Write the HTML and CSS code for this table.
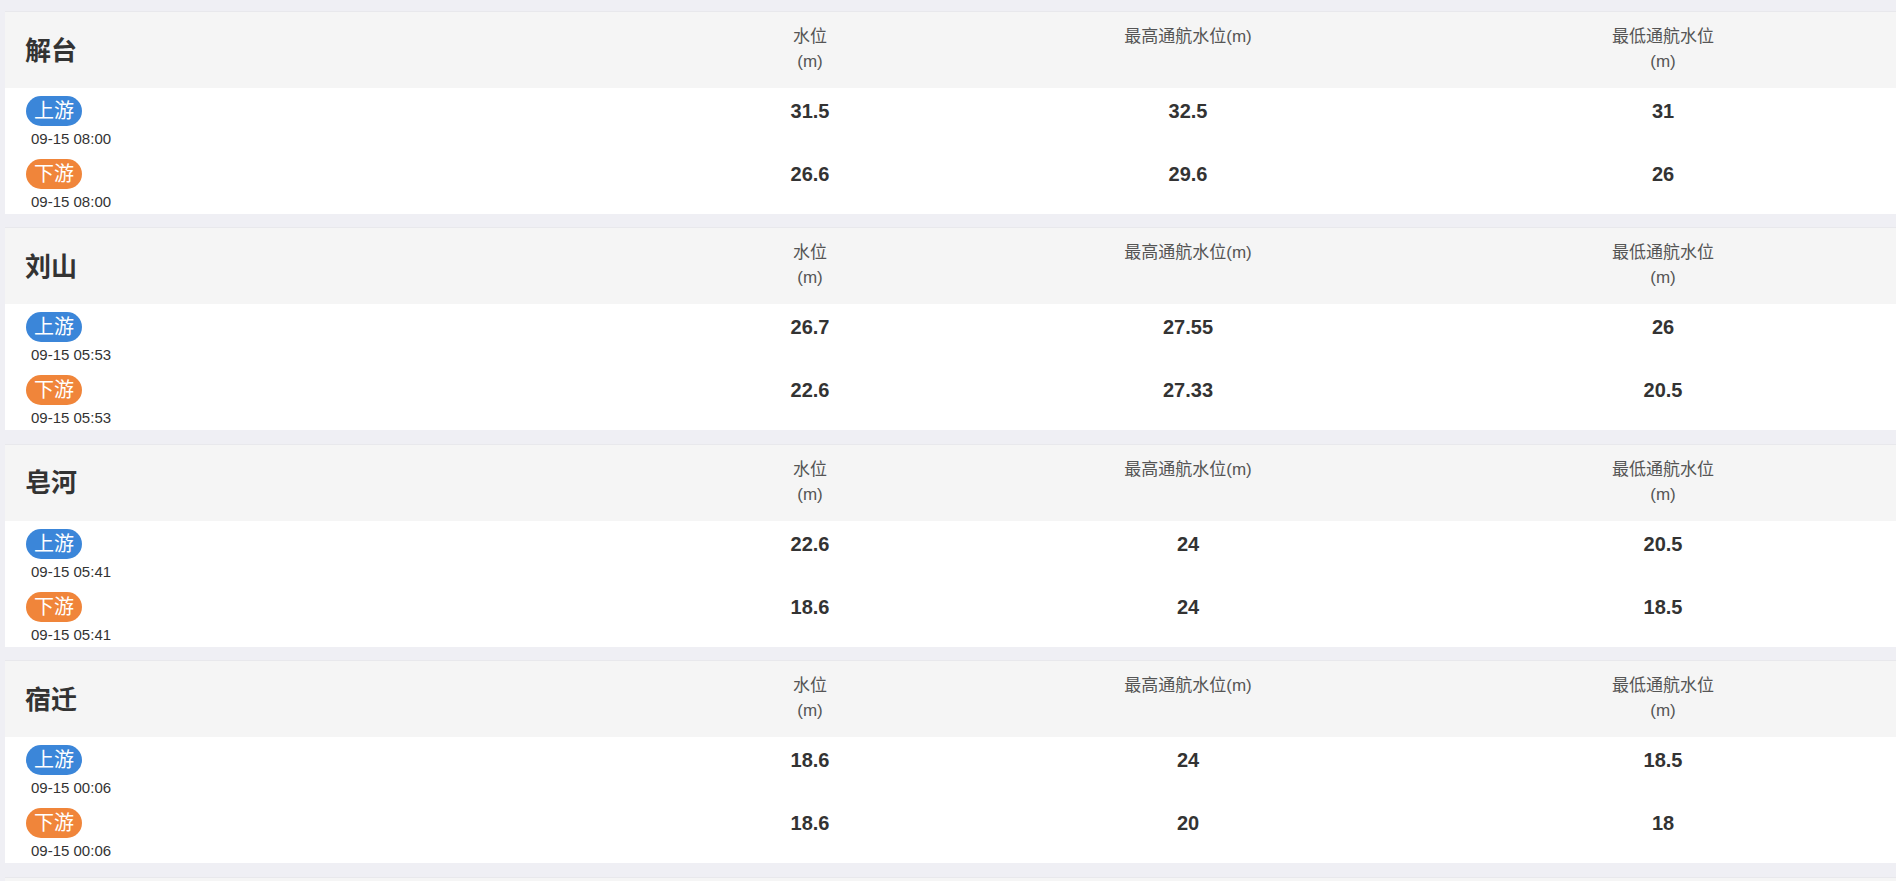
FILE: index.html
```html
<!DOCTYPE html>
<html lang="zh-CN">
<head>
<meta charset="utf-8">
<title>水位</title>
<link rel="stylesheet" href="styles.css">
</head>
<body>
<main class="list">
  <section class="station">
    <div class="head">
      <div class="name">解台</div>
      <div class="label">水位<br>(m)</div>
      <div class="label">最高通航水位(m)</div>
      <div class="label">最低通航水位<br>(m)</div>
    </div>
    <div class="rows">
      <div class="row">
        <div class="loc"><span class="tag up">上游</span><span class="time">09-15 08:00</span></div>
        <div class="val">31.5</div><div class="val">32.5</div><div class="val">31</div>
      </div>
      <div class="row">
        <div class="loc"><span class="tag down">下游</span><span class="time">09-15 08:00</span></div>
        <div class="val">26.6</div><div class="val">29.6</div><div class="val">26</div>
      </div>
    </div>
  </section>

  <section class="station">
    <div class="head">
      <div class="name">刘山</div>
      <div class="label">水位<br>(m)</div>
      <div class="label">最高通航水位(m)</div>
      <div class="label">最低通航水位<br>(m)</div>
    </div>
    <div class="rows">
      <div class="row">
        <div class="loc"><span class="tag up">上游</span><span class="time">09-15 05:53</span></div>
        <div class="val">26.7</div><div class="val">27.55</div><div class="val">26</div>
      </div>
      <div class="row">
        <div class="loc"><span class="tag down">下游</span><span class="time">09-15 05:53</span></div>
        <div class="val">22.6</div><div class="val">27.33</div><div class="val">20.5</div>
      </div>
    </div>
  </section>

  <section class="station">
    <div class="head">
      <div class="name">皂河</div>
      <div class="label">水位<br>(m)</div>
      <div class="label">最高通航水位(m)</div>
      <div class="label">最低通航水位<br>(m)</div>
    </div>
    <div class="rows">
      <div class="row">
        <div class="loc"><span class="tag up">上游</span><span class="time">09-15 05:41</span></div>
        <div class="val">22.6</div><div class="val">24</div><div class="val">20.5</div>
      </div>
      <div class="row">
        <div class="loc"><span class="tag down">下游</span><span class="time">09-15 05:41</span></div>
        <div class="val">18.6</div><div class="val">24</div><div class="val">18.5</div>
      </div>
    </div>
  </section>

  <section class="station">
    <div class="head">
      <div class="name">宿迁</div>
      <div class="label">水位<br>(m)</div>
      <div class="label">最高通航水位(m)</div>
      <div class="label">最低通航水位<br>(m)</div>
    </div>
    <div class="rows">
      <div class="row">
        <div class="loc"><span class="tag up">上游</span><span class="time">09-15 00:06</span></div>
        <div class="val">18.6</div><div class="val">24</div><div class="val">18.5</div>
      </div>
      <div class="row">
        <div class="loc"><span class="tag down">下游</span><span class="time">09-15 00:06</span></div>
        <div class="val">18.6</div><div class="val">20</div><div class="val">18</div>
      </div>
    </div>
  </section>

  <section class="station">
    <div class="head">
      <div class="name">刘老涧</div>
      <div class="label">水位<br>(m)</div>
      <div class="label">最高通航水位(m)</div>
      <div class="label">最低通航水位<br>(m)</div>
    </div>
  </section>
</main>
</body>
</html>
```

FILE: styles.css
```css
html, body {
  margin: 0;
  padding: 0;
}

body {
  background: #efeff4;
  font-family: "Liberation Sans", "Noto Sans CJK SC", sans-serif;
  color: #333;
  overflow: hidden;
}

.list {
  display: flex;
  flex-direction: column;
  gap: 13.4px;
  padding: 11px 0 0 5px;
}

.station {
  display: flex;
  flex-direction: column;
}

.head,
.row {
  display: grid;
  grid-template-columns: 669px 272px 484px 1fr;
}

.head {
  height: 76px;
  background: #f5f5f5;
  border-top: 1px solid #e8e8ec;
}

.name {
  align-self: center;
  padding: 0 0 4px 20px;
  font-size: 26px;
  font-weight: bold;
  color: #333;
}

.label {
  align-self: start;
  padding-top: 12px;
  text-align: center;
  font-size: 17px;
  line-height: 25px;
  color: #555;
}

.rows {
  background: #fff;
  padding: 8px 0 3px;
  display: flex;
  flex-direction: column;
  gap: 11px;
}

.loc {
  display: flex;
  flex-direction: column;
  align-items: flex-start;
  padding-left: 21px;
}

.tag {
  height: 30px;
  line-height: 30px;
  padding: 0 8px;
  border-radius: 15px;
  font-size: 20px;
  color: #fff;
}

.tag.up {
  background: #3b86d9;
}

.tag.down {
  background: #f0853a;
}

.time {
  margin-top: 4px;
  padding-left: 5px;
  font-size: 15px;
  line-height: 18px;
  color: #333;
}

.val {
  align-self: start;
  text-align: center;
  font-size: 20px;
  font-weight: bold;
  line-height: 30px;
  color: #333;
}
```
